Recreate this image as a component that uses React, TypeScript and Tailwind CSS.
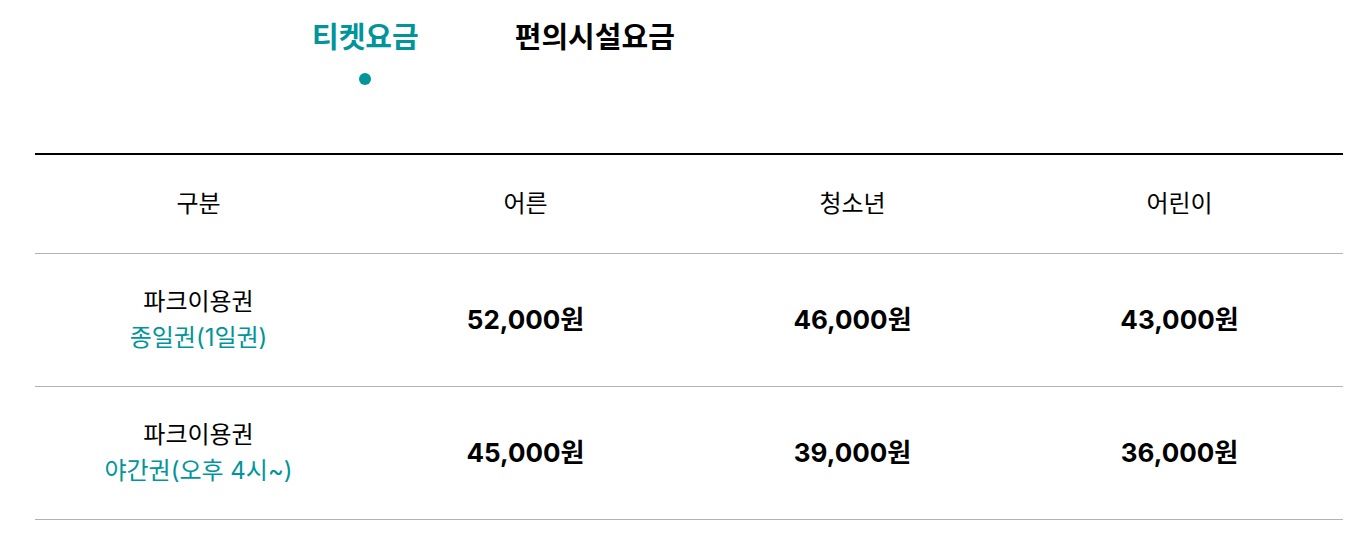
import React from "react";

const rows = [
  { name: "파크이용권", sub: "종일권(1일권)", prices: ["52,000원", "46,000원", "43,000원"] },
  { name: "파크이용권", sub: "야간권(오후 4시~)", prices: ["45,000원", "39,000원", "36,000원"] },
];

export default function App() {
  return (
    <div
      className="min-h-[544px] bg-white text-black"
      style={{ fontFamily: 'Inter, "Noto Sans CJK KR", sans-serif' }}
    >
      <div className="flex pl-[312px] pt-[16px] gap-[96px]">
        <button className="flex flex-col items-center">
          <span className="text-[29px] font-bold leading-[44px] text-[#00959a]">티켓요금</span>
          <span className="mt-[13px] h-[12px] w-[12px] rounded-full bg-[#00959a]" />
        </button>
        <button className="flex flex-col items-center">
          <span className="text-[29px] font-bold leading-[44px]">편의시설요금</span>
        </button>
      </div>

      <div className="ml-[35px] mr-[25px] mt-[68px]">
        <table className="w-full table-fixed border-collapse border-t-2 border-black">
          <thead>
            <tr className="h-[99px] border-b border-[#b3b3b3] text-[24px]">
              <th className="font-normal">구분</th>
              <th className="font-normal">어른</th>
              <th className="font-normal">청소년</th>
              <th className="font-normal">어린이</th>
            </tr>
          </thead>
          <tbody>
            {rows.map((row) => (
              <tr key={row.sub} className="h-[133px] border-b border-[#b3b3b3]">
                <td className="text-center text-[24px] leading-[36px]">
                  <div>{row.name}</div>
                  <div className="text-[#00959a]">{row.sub}</div>
                </td>
                {row.prices.map((p) => (
                  <td key={p} className="text-center text-[26px] font-bold">
                    {p}
                  </td>
                ))}
              </tr>
            ))}
          </tbody>
        </table>
      </div>
    </div>
  );
}
